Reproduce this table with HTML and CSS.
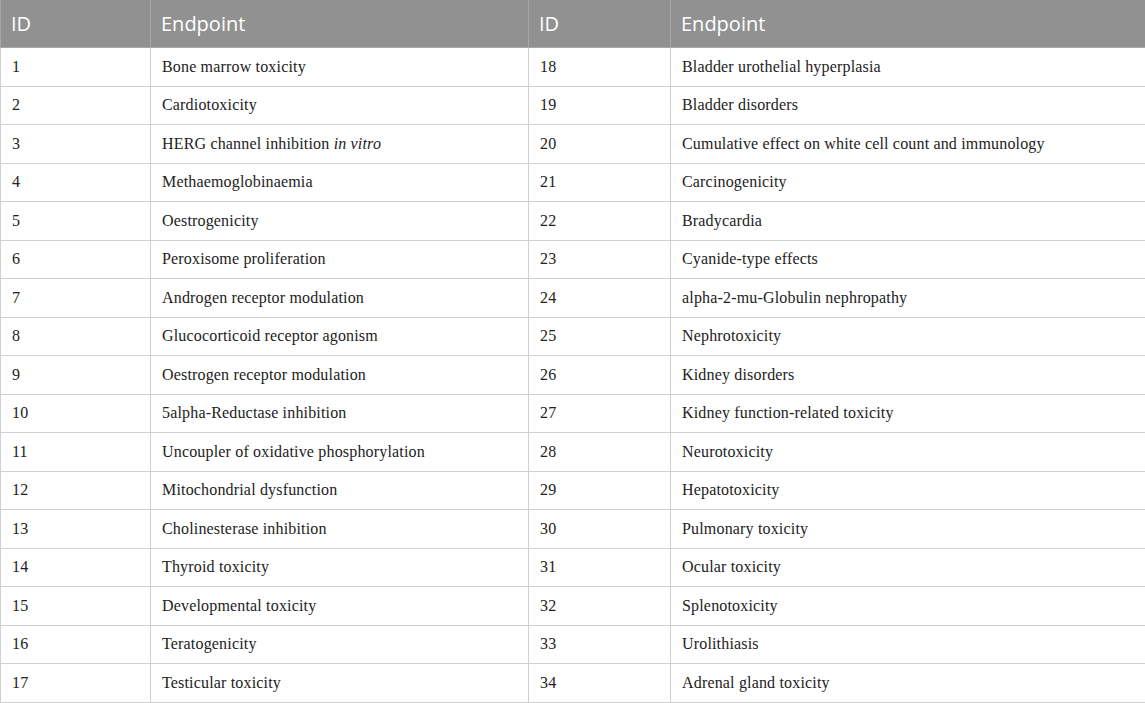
FILE: index.html
```html
<!DOCTYPE html>
<html lang="en">
<head>
    <meta charset="UTF-8">
    <title>Endpoints</title>
    <link rel="stylesheet" href="styles.css">
</head>
<body>
    <table class="endpoints">
        <colgroup>
            <col class="col-id">
            <col class="col-name">
            <col class="col-id2">
            <col class="col-name2">
        </colgroup>
        <thead>
            <tr>
                <th>ID</th>
                <th>Endpoint</th>
                <th>ID</th>
                <th>Endpoint</th>
            </tr>
        </thead>
        <tbody>
            <tr><td>1</td><td>Bone marrow toxicity</td><td>18</td><td>Bladder urothelial hyperplasia</td></tr>
            <tr><td>2</td><td>Cardiotoxicity</td><td>19</td><td>Bladder disorders</td></tr>
            <tr><td>3</td><td>HERG channel inhibition <i>in vitro</i></td><td>20</td><td>Cumulative effect on white cell count and immunology</td></tr>
            <tr><td>4</td><td>Methaemoglobinaemia</td><td>21</td><td>Carcinogenicity</td></tr>
            <tr><td>5</td><td>Oestrogenicity</td><td>22</td><td>Bradycardia</td></tr>
            <tr><td>6</td><td>Peroxisome proliferation</td><td>23</td><td>Cyanide-type effects</td></tr>
            <tr><td>7</td><td>Androgen receptor modulation</td><td>24</td><td>alpha-2-mu-Globulin nephropathy</td></tr>
            <tr><td>8</td><td>Glucocorticoid receptor agonism</td><td>25</td><td>Nephrotoxicity</td></tr>
            <tr><td>9</td><td>Oestrogen receptor modulation</td><td>26</td><td>Kidney disorders</td></tr>
            <tr><td>10</td><td>5alpha-Reductase inhibition</td><td>27</td><td>Kidney function-related toxicity</td></tr>
            <tr><td>11</td><td>Uncoupler of oxidative phosphorylation</td><td>28</td><td>Neurotoxicity</td></tr>
            <tr><td>12</td><td>Mitochondrial dysfunction</td><td>29</td><td>Hepatotoxicity</td></tr>
            <tr><td>13</td><td>Cholinesterase inhibition</td><td>30</td><td>Pulmonary toxicity</td></tr>
            <tr><td>14</td><td>Thyroid toxicity</td><td>31</td><td>Ocular toxicity</td></tr>
            <tr><td>15</td><td>Developmental toxicity</td><td>32</td><td>Splenotoxicity</td></tr>
            <tr><td>16</td><td>Teratogenicity</td><td>33</td><td>Urolithiasis</td></tr>
            <tr><td>17</td><td>Testicular toxicity</td><td>34</td><td>Adrenal gland toxicity</td></tr>
        </tbody>
    </table>
</body>
</html>
```
FILE: styles.css
```css
body {
    margin: 0;
    padding: 0;
    background: #ffffff;
}
.endpoints {
    width: 1145px;
    border-collapse: collapse;
    table-layout: fixed;
}
.col-id { width: 150px; }
.col-name { width: 378px; }
.col-id2 { width: 142px; }
.col-name2 { width: 475px; }
.endpoints th {
    background: #919191;
    color: #ffffff;
    font-family: "Open Sans", sans-serif;
    font-weight: normal;
    font-size: 20px;
    text-align: left;
    height: 47px;
    padding: 0 10px;
    border: 1px solid #a8a8a8;
    border-top: none;
}
.endpoints td {
    font-family: "Liberation Serif", serif;
    font-size: 16px;
    letter-spacing: 0.17px;
    color: #222222;
    height: 37.5px;
    padding: 0 11px;
    border: 1px solid #cfcfcf;
    white-space: nowrap;
}
```
